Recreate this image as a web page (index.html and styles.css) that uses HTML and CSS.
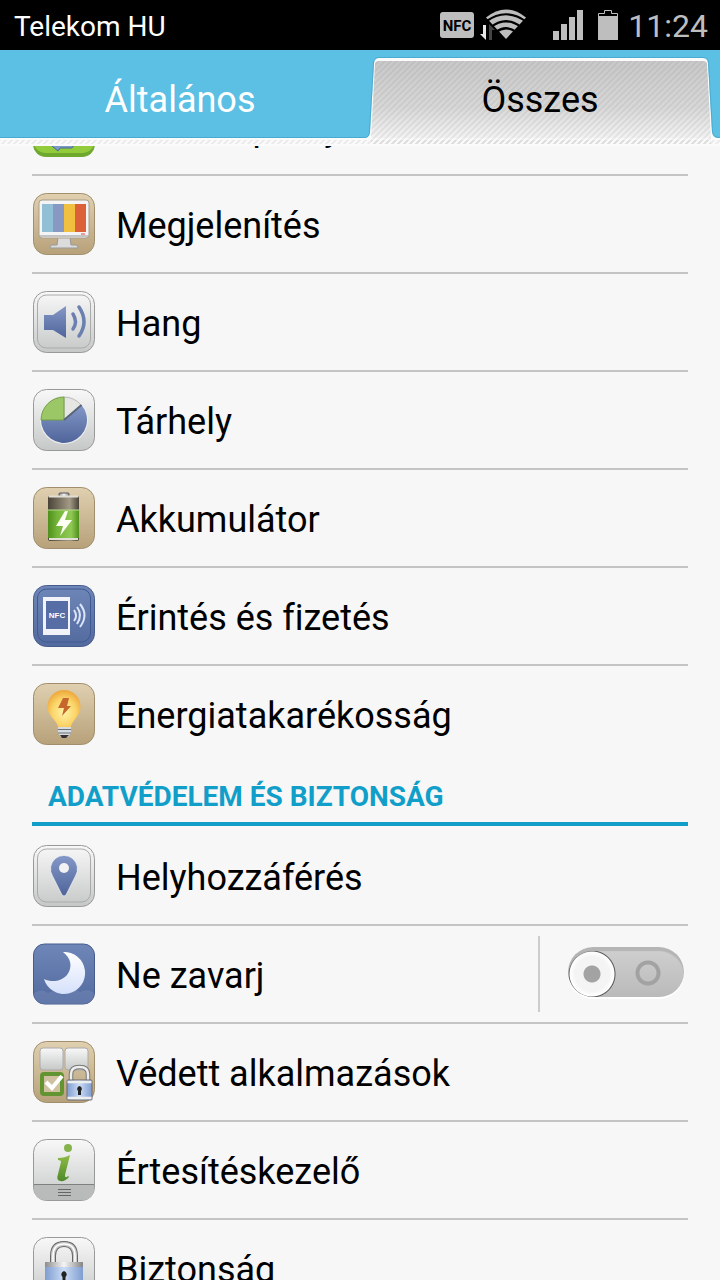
FILE: index.html
```html
<!doctype html>
<html lang="hu">
  <head>
    <meta charset="UTF-8" />
    <meta name="viewport" content="width=device-width, initial-scale=1.0" />
    <title>Beállítások</title>
    <link rel="stylesheet" href="styles.css">
  </head>
  <body>
    <!-- shared gradients -->
    <svg class="defs" width="0" height="0" aria-hidden="true">
      <defs>
        <linearGradient id="tan" x1="0" y1="0" x2="0" y2="1">
          <stop offset="0" stop-color="#e0d0b0" /><stop offset="1" stop-color="#b7a17a" />
        </linearGradient>
        <linearGradient id="silver" x1="0" y1="0" x2="0" y2="1">
          <stop offset="0" stop-color="#f8f8f8" /><stop offset="1" stop-color="#c6c8c8" />
        </linearGradient>
        <linearGradient id="navy" x1="0" y1="0" x2="0" y2="1">
          <stop offset="0" stop-color="#6f86b8" /><stop offset="1" stop-color="#536a9f" />
        </linearGradient>
        <linearGradient id="blue" x1="0" y1="0" x2="0" y2="1">
          <stop offset="0" stop-color="#8498c8" /><stop offset="1" stop-color="#4f6499" />
        </linearGradient>
        <linearGradient id="green" x1="0" y1="0" x2="0" y2="1">
          <stop offset="0" stop-color="#8fbb45" /><stop offset="1" stop-color="#4f8a2b" />
        </linearGradient>
        <linearGradient id="battery" x1="0" y1="0" x2="1" y2="0">
          <stop offset="0" stop-color="#4f8f1c" /><stop offset="0.3" stop-color="#74b53a" />
          <stop offset="0.75" stop-color="#8fc954" /><stop offset="1" stop-color="#4f8f1c" />
        </linearGradient>
        <linearGradient id="battery-top" x1="0" y1="0" x2="1" y2="0">
          <stop offset="0" stop-color="#4a4438" /><stop offset="0.7" stop-color="#a39a86" />
          <stop offset="1" stop-color="#4a4438" />
        </linearGradient>
        <linearGradient id="metal" x1="0" y1="0" x2="1" y2="0">
          <stop offset="0" stop-color="#8c8c8c" /><stop offset="0.5" stop-color="#f5f5f5" />
          <stop offset="1" stop-color="#858585" />
        </linearGradient>
        <linearGradient id="lock" x1="0" y1="0" x2="1" y2="0">
          <stop offset="0" stop-color="#7f9dd0" /><stop offset="0.5" stop-color="#cbdcf5" />
          <stop offset="1" stop-color="#7f9dd0" />
        </linearGradient>
        <radialGradient id="bulb" cx="0.5" cy="0.6" r="0.6">
          <stop offset="0" stop-color="#fff3a8" /><stop offset="0.6" stop-color="#fbd468" />
          <stop offset="1" stop-color="#eda63a" />
        </radialGradient>
        <linearGradient id="moon" x1="0" y1="0" x2="0" y2="1">
          <stop offset="0" stop-color="#ffffff" /><stop offset="1" stop-color="#d5e0fb" />
        </linearGradient>
        <linearGradient id="tab" x1="0" y1="0" x2="0" y2="1">
          <stop offset="0" stop-color="#c8c8c8" /><stop offset="0.6" stop-color="#d8d8d8" />
          <stop offset="1" stop-color="#f4f4f4" />
        </linearGradient>
        <pattern id="hatch" width="6" height="6" patternUnits="userSpaceOnUse">
          <path d="M-2 2 2-2M0 6 6 0M4 8 8 4" stroke="#888" stroke-opacity="0.14" stroke-width="2" />
        </pattern>
      </defs>
    </svg>

    <header>
      <div class="status-bar">
        <span class="carrier">Telekom HU</span>
        <svg class="nfc" viewBox="0 0 34 26" aria-hidden="true">
          <rect width="34" height="26" rx="3" fill="#bebebe" />
          <text x="17" y="19" text-anchor="middle" class="nfc-text">NFC</text>
        </svg>
        <svg class="wifi" viewBox="0 0 46 32" aria-hidden="true">
          <path d="M3 16h3v15L0 25h3z" fill="#e8e8e8" />
          <path d="M6 8.500Q26-7.500 46 8.500L26 30Z" fill="#bebebe" />
          <path d="M6 12.500Q26-2 46 12.500M11 18Q26 6.500 41 18M16 23Q26 15.500 36 23" fill="none" stroke="#000" stroke-width="2.200" />
          <path d="M9 31V15l6 6h-3v10z" fill="#444" />
        </svg>
        <svg class="signal" viewBox="0 0 30 30" aria-hidden="true">
          <path d="M0 21h6v9H0zM8 14h6v16H8zM16 7h6v23h-6zM24 0h6v30h-6z" fill="#bebebe" />
        </svg>
        <svg class="power" viewBox="0 0 20 30" aria-hidden="true">
          <path d="M.5 6V3.500h6v-3h7v3h6V6" fill="none" stroke="#bebebe" />
          <path d="M0 6h20v24H0z" fill="#bebebe" />
        </svg>
        <time class="clock">11:24</time>
      </div>
      <nav class="tabs">
        <svg class="tab-shape" viewBox="0 0 720 96" preserveAspectRatio="none" aria-hidden="true">
          <path d="M0 88H364Q369.500 88 370 82L374 13Q374.500 8 379 8H703Q707.500 8 708 13L712 82Q713 88 718 88H720V96H0Z" fill="#fbfbfb" />
          <path d="M371 88 375 14Q375 11 379 11H703Q707 11 707 14L711 88Z" fill="url(#tab)" />
          <path d="M371 94V88L375 14Q375 11 379 11H703Q707 11 707 14L711 88V94Z" fill="url(#hatch)" />
          <path d="M0 90H720V94H0Z" fill="url(#hatch)" />
          <path d="M0 87.500H364Q369 88 369.500 82L373.500 13Q374 7.500 379 7.500H703Q708 7.500 708.500 13L712.500 82Q713 87.500 720 87.500" fill="none" stroke="#3f9cc4" stroke-opacity="0.6" />
        </svg>
        <button type="button">Általános</button>
        <button type="button" class="active">Összes</button>
      </nav>
    </header>

    <main>
      <ul class="settings scrolled">
        <li>
          <a href="#kezdokepernyo">
            <svg class="icon" viewBox="0 0 64 64" aria-hidden="true">
              <rect x="1" y="1" width="62" height="62" rx="13" fill="#6fa82e" />
              <rect x="1" y="1" width="62" height="58" rx="13" fill="#92cb3c" />
              <path d="M18 48h26l-4 6H28l-2 3-6-5z" fill="#7d9bc9" stroke="#4c6a8c" />
            </svg>
            <span>Kezdőképernyő</span>
          </a>
        </li>
        <li>
          <a href="#megjelenites">
            <svg class="icon" viewBox="0 0 64 64" aria-hidden="true">
              <rect x="1.500" y="1.500" width="61" height="61" rx="13" fill="url(#tan)" stroke="#a08e6c" />
              <path d="M26 45h12l1 8h5q2 0 2 3H18q0-3 2-3h5z" fill="#dcdcdc" stroke="#999" />
              <rect x="7" y="8" width="50" height="38" rx="3" fill="#f4f4f4" stroke="#aa9f8b" />
              <path d="M8 43h48v2H8z" fill="#c4c4c4" />
              <path d="M10 12h11v28H10z" fill="#91bfd5" />
              <path d="M21 12h11v28H21z" fill="#8798c3" />
              <path d="M32 12h11v28H32z" fill="#f1c040" />
              <path d="M43 12h11v28H43z" fill="#dc6038" />
              <path d="M49 42h4" stroke="#d44" />
            </svg>
            <span>Megjelenítés</span>
          </a>
        </li>
        <li>
          <a href="#hang">
            <svg class="icon" viewBox="0 0 64 64" aria-hidden="true">
              <rect x="1.500" y="1.500" width="61" height="61" rx="13" fill="url(#silver)" stroke="#999" />
              <rect x="5.500" y="5" width="53" height="53" rx="9" fill="none" stroke="#aaa" />
              <path d="M12 25h9L34 16V48L21 40h-9z" fill="url(#blue)" />
              <path d="M41 24q5 8 0 15M47 17q10 15 0 29" fill="none" stroke="#6b80b0" stroke-width="3.500" stroke-linecap="round" />
            </svg>
            <span>Hang</span>
          </a>
        </li>
        <li>
          <a href="#tarhely">
            <svg class="icon" viewBox="0 0 64 64" aria-hidden="true">
              <rect x="1.500" y="1.500" width="61" height="61" rx="13" fill="url(#silver)" stroke="#999" />
              <circle cx="32" cy="32" r="24" fill="#eee" />
              <path d="M32 32V9A23 23 0 0 1 49 17Z" fill="#e6e6e4" stroke="#bbb" />
              <path d="M32 32 49.500 17A23 23 0 1 1 9 32Z" fill="url(#blue)" />
              <path d="M32 32H9A23 23 0 0 1 32 9Z" fill="#9cc766" stroke="#719e43" />
              <path d="M32 32 49.500 17" stroke="#596579" stroke-width="2" />
            </svg>
            <span>Tárhely</span>
          </a>
        </li>
        <li>
          <a href="#akkumulator">
            <svg class="icon" viewBox="0 0 64 64" aria-hidden="true">
              <rect x="1.500" y="1.500" width="61" height="61" rx="13" fill="url(#tan)" stroke="#a08e6c" />
              <rect x="27" y="7" width="10" height="5" rx="1" fill="url(#metal)" stroke="#555" />
              <rect x="16" y="10" width="31" height="45" rx="2" fill="url(#battery-top)" />
              <path d="M16 24h31v28H16z" fill="url(#battery)" />
              <path d="M17 10.500h29M17 53h29" stroke="#e1dfd5" stroke-width="2" />
              <path d="M16 24h31" stroke="#b9db8d" />
              <path d="M33 25 24 40h7l-3 10L40 34h-7l3-9z" fill="#fcfff2" />
            </svg>
            <span>Akkumulátor</span>
          </a>
        </li>
        <li>
          <a href="#erintes">
            <svg class="icon" viewBox="0 0 64 64" aria-hidden="true">
              <rect x="1.500" y="1.500" width="61" height="61" rx="13" fill="url(#navy)" stroke="#465c8c" />
              <rect x="5.500" y="5" width="53" height="53" rx="9" fill="none" stroke="#415891" />
              <path d="M11 13H38V51H11z" fill="#f1f3f8" />
              <path d="M14 17H36V45H14z" fill="#566da5" />
              <text x="25" y="34" text-anchor="middle" class="nfc-label">NFC</text>
              <path d="M42 26q4 6 0 11M45 23q6 8 0 17M48 20q9 11 0 23" fill="none" stroke="#dce5fa" stroke-width="2" />
            </svg>
            <span>Érintés és fizetés</span>
          </a>
        </li>
        <li>
          <a href="#energia">
            <svg class="icon" viewBox="0 0 64 64" aria-hidden="true">
              <rect x="1.500" y="1.500" width="61" height="61" rx="13" fill="url(#tan)" stroke="#a08e6c" />
              <path d="M26 44h13v7l-3 4h-7l-3-4z" fill="#d8dcdf" />
              <path d="M26 47.500h13M26 51h13" stroke="#66727d" />
              <path d="M28 53h9l-3 3h-4z" fill="#333" />
              <path d="M32 8A16.500 16.500 0 0 1 48.500 25C48.500 34 40 38 39 45H26C25 38 15.500 34 15.500 25A16.500 16.500 0 0 1 32 8Z" fill="url(#bulb)" />
              <path d="M31 16h6l-2 8h4L30 34l2-8h-6z" fill="#c5662c" />
            </svg>
            <span>Energiatakarékosság</span>
          </a>
        </li>
      </ul>

      <h2>Adatvédelem és biztonság</h2>

      <ul class="settings">
        <li>
          <a href="#hely">
            <svg class="icon" viewBox="0 0 64 64" aria-hidden="true">
              <rect x="1.500" y="1.500" width="61" height="61" rx="13" fill="url(#silver)" stroke="#999" />
              <rect x="5.500" y="5" width="53" height="53" rx="9" fill="none" stroke="#aaa" />
              <path d="M32 52Q30.500 52 29.500 50L20.500 32A13.500 13.500 0 1 1 43.500 32L34.500 50Q33.500 52 32 52Z" fill="url(#blue)" stroke="#fff" stroke-opacity="0.6" />
              <circle cx="32" cy="24" r="5" fill="#f2f2f2" />
            </svg>
            <span>Helyhozzáférés</span>
          </a>
        </li>
        <li>
          <a href="#ne-zavarj">
            <svg class="icon" viewBox="0 0 64 64" aria-hidden="true">
              <rect x="1.500" y="2" width="61" height="60" rx="11" fill="url(#navy)" stroke="#465c8c" />
              <path d="M2 51q8-5 14 0 8-5 16 2 10-8 16-3 8-4 14 1Q62 62 50 62H14Q2 62 2 51Z" fill="#7d92bd" fill-opacity="0.35" />
              <path d="M31 10A21 21 0 1 1 12 37C20 41 30 39 35 33 41 25 39 16 31 10Z" fill="url(#moon)" />
            </svg>
            <span id="dnd">Ne zavarj</span>
          </a>
          <div class="toggle">
            <input type="checkbox" role="switch" aria-labelledby="dnd">
          </div>
        </li>
        <li>
          <a href="#vedett">
            <svg class="icon" viewBox="0 0 64 64" aria-hidden="true">
              <rect x="1.500" y="1.500" width="61" height="61" rx="13" fill="url(#tan)" stroke="#a08e6c" />
              <rect x="8" y="8" width="23" height="22" rx="3" fill="url(#silver)" stroke="#aaa" />
              <rect x="33" y="8" width="23" height="22" rx="3" fill="url(#silver)" stroke="#aaa" />
              <rect x="10" y="34" width="20" height="20" rx="2" fill="#cfc0a0" stroke="#629432" stroke-width="4" />
              <path d="m14 42 6 6 10-12" fill="none" stroke="#fff" stroke-width="4" />
              <path d="M39 41V34q0-7 8.500-7T56 34v7" fill="none" stroke="#777" stroke-width="4.500" />
              <path d="M39 41V34q0-7 8.500-7T56 34v7" fill="none" stroke="#eee" stroke-width="2.500" />
              <rect x="35" y="40" width="25" height="20" rx="1" fill="url(#lock)" stroke="#6b6b6b" />
              <path d="M35.500 42h24M35.500 58h24" stroke="#eee" stroke-width="2.500" />
              <path d="M47.500 46a3 3 0 0 1 1.500 5v4h-3v-4a3 3 0 0 1 1.500-5Z" fill="#222" />
            </svg>
            <span>Védett alkalmazások</span>
          </a>
        </li>
        <li>
          <a href="#ertesites">
            <svg class="icon" viewBox="0 0 64 64" aria-hidden="true">
              <rect x="1.500" y="1.500" width="61" height="61" rx="13" fill="url(#silver)" stroke="#999" />
              <path d="M2 47H62V50Q62 62 50 62H14Q2 62 2 50Z" fill="#b9bbbb" />
              <path d="M2 46.500H62" stroke="#808080" />
              <circle cx="36" cy="10" r="4" fill="#87b34c" />
              <path d="M26 20Q33 20 38 17L33 37Q33 41 36 38L37 39Q33 44 28 43 24 42 26 36L29 24Q29 22 26 22Z" fill="url(#green)" />
              <path d="M26 51.500h13M26 54.500h13M26 57.500h13" stroke="#666" />
            </svg>
            <span>Értesítéskezelő</span>
          </a>
        </li>
        <li>
          <a href="#biztonsag">
            <svg class="icon" viewBox="0 0 64 64" aria-hidden="true">
              <rect x="1.500" y="1.500" width="61" height="61" rx="13" fill="url(#silver)" stroke="#999" />
              <path d="M21 28V20Q21 8 32 8T43 20v8" fill="none" stroke="#666" stroke-width="6" />
              <path d="M21 28V20Q21 8 32 8T43 20v8" fill="none" stroke="#c9c9c9" stroke-width="4" />
              <path d="M21 28V20Q21 8 32 8T43 20v8" fill="none" stroke="#fff" stroke-width="1.500" />
              <path d="M13 26h38v31H13z" fill="url(#lock)" />
              <path d="M13 26h38v5H13zM13 53h38v4H13z" fill="url(#metal)" />
              <path d="M32 35a3.500 3.500 0 0 1 1.500 6v9h-3v-9a3.500 3.500 0 0 1 1.500-6Z" fill="#222" />
            </svg>
            <span>Biztonság</span>
          </a>
        </li>
      </ul>
    </main>
  </body>
</html>
```

FILE: styles.css
```css
* {
  box-sizing: border-box;
}
html, body {
  height: 100%;
}
body {
  margin: 0;
  display: flex;
  flex-direction: column;
  overflow: hidden;
  font-family: Roboto, "Noto Sans", sans-serif;
  font-variant-ligatures: none;
  color: #000;
  background: #f7f7f7;
}
svg {
  display: block;
  flex: none;
}
.defs {
  position: absolute;
}
header {
  flex: none;
}

/* status bar */
.status-bar {
  display: flex;
  align-items: center;
  height: 50px;
  padding: 0 12px 0 14px;
  background: #000;
}
.carrier {
  margin-right: auto;
  padding-top: 2px;
  font-size: 28px;
  color: #fff;
}
.nfc {
  width: 34px;
  height: 26px;
}
.nfc-text {
  font: bold 15px Roboto, sans-serif;
  fill: #000;
}
.wifi {
  width: 46px;
  height: 32px;
  margin-left: 6px;
}
.signal {
  width: 30px;
  height: 30px;
  margin-left: 27px;
}
.power {
  width: 20px;
  height: 30px;
  margin-left: 15px;
}
.clock {
  margin-left: 10px;
  padding-top: 2px;
  font-size: 32px;
  color: #bebebe;
}

/* tabs */
.tabs {
  position: relative;
  display: flex;
  height: 96px;
  padding-bottom: 8px;
  background: #5bc0e4;
}
.tab-shape {
  position: absolute;
  inset: 0;
  width: 100%;
  height: 100%;
}
.tabs button {
  position: relative;
  flex: 1;
  padding: 12px 0 0;
  border: none;
  background: none;
  font: inherit;
  font-size: 36px;
  color: #fff;
  cursor: pointer;
}
.tabs .active {
  color: #000;
}

/* settings list */
main {
  flex: 1;
  min-height: 0;
  padding: 0 32px;
  overflow: hidden;
}
.settings {
  margin: 0;
  padding: 0;
  list-style: none;
}
.scrolled {
  margin-top: -68px;
}
.settings li {
  display: flex;
  align-items: center;
  height: 98px;
  border-bottom: 2px solid #c4c4c4;
}
.scrolled li:last-child {
  height: 96px;
  border-bottom: none;
}
.settings a {
  flex: 1;
  display: flex;
  align-items: center;
  gap: 20px;
  height: 100%;
  font-size: 36px;
  color: inherit;
  text-decoration: none;
}
.settings span {
  padding-top: 4px;
}
.icon {
  width: 64px;
  height: 64px;
}
.nfc-label {
  font: bold 8px "Liberation Sans", sans-serif;
  fill: #fff;
}
h2 {
  height: 64px;
  margin: 0 0 2px;
  padding: 5px 16px 0;
  border-bottom: 4px solid #119fc9;
  font-size: 28px;
  line-height: 60px;
  font-weight: bold;
  text-transform: uppercase;
  color: #119fc9;
}

/* switch */
.toggle {
  display: flex;
  align-items: center;
  height: 76px;
  padding: 0 4px 4px 28px;
  border-left: 2px solid #ccc;
}
.toggle input {
  appearance: none;
  width: 116px;
  height: 50px;
  margin: 0;
  border-radius: 25px;
  background:
    radial-gradient(circle at 24px 27px, #a3a3a3 8px, transparent 9px),
    radial-gradient(circle at 24px 27px, #f4f4f4 17px, #fff 22px, #555 23px, transparent 24px),
    radial-gradient(circle at 80px 26px, transparent 8px, #a2a2a2 9px, #a2a2a2 12px, transparent 13px),
    linear-gradient(#d0d0d0, #bababa);
  box-shadow: inset 0 4px 1px #b5b5b5, 0 2px 1px #fff;
  cursor: pointer;
}
```
